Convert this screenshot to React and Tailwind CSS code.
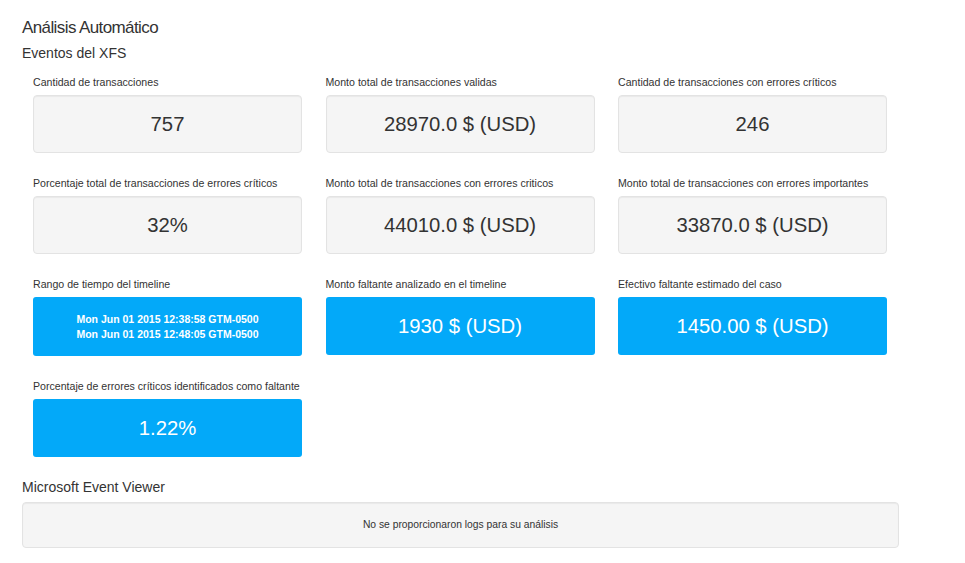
import React from 'react';

const rows = [
  [
    { label: 'Cantidad de transacciones', value: '757' },
    { label: 'Monto total de transacciones validas', value: '28970.0 $ (USD)' },
    { label: 'Cantidad de transacciones con errores críticos', value: '246' },
  ],
  [
    { label: 'Porcentaje total de transacciones de errores críticos', value: '32%' },
    { label: 'Monto total de transacciones con errores criticos', value: '44010.0 $ (USD)' },
    { label: 'Monto total de transacciones con errores importantes', value: '33870.0 $ (USD)' },
  ],
];

function Well({ label, value }) {
  return (
    <div>
      <div className="text-[10.6px] leading-[13px] text-[#333] mb-[6px] whitespace-nowrap">{label}</div>
      <div className="h-[58px] rounded-[4px] border border-[#e3e3e3] bg-[#f5f5f5] shadow-[inset_0_1px_1px_rgba(0,0,0,0.05)] flex items-center justify-center text-[20.3px] text-[#333]">
        {value}
      </div>
    </div>
  );
}

function BlueWell({ label, children, big = true, h = 'h-[58px]' }) {
  return (
    <div>
      <div className="text-[10.6px] leading-[13px] text-[#333] mb-[6px] whitespace-nowrap">{label}</div>
      <div
        className={`${h} rounded-[3px] bg-[#03a9f9] text-white flex flex-col items-center justify-center ${
          big ? 'text-[20.3px]' : 'text-[10.5px] font-bold leading-[15px]'
        }`}
      >
        {children}
      </div>
    </div>
  );
}

export default function App() {
  return (
    <div className="bg-white min-h-[563px] pl-[22px] pt-[17px] text-[#333]" style={{ fontFamily: '"Liberation Sans", Arial, sans-serif' }}>
      <h1 className="text-[17px] leading-[22px] tracking-[-0.6px]">Análisis Automático</h1>
      <h2 className="text-[14px] leading-[17px] mt-[6px]">Eventos del XFS</h2>

      <div className="ml-[11px] mt-[14px] grid grid-cols-[269px_269px_269px] gap-x-[23.5px] gap-y-[24px]">
        {rows.flat().map((c) => (
          <Well key={c.label} label={c.label} value={c.value} />
        ))}
        <BlueWell label="Rango de tiempo del timeline" big={false} h="h-[59px]">
          <span>Mon Jun 01 2015 12:38:58 GTM-0500</span>
          <span>Mon Jun 01 2015 12:48:05 GTM-0500</span>
        </BlueWell>
        <BlueWell label="Monto faltante analizado en el timeline">1930 $ (USD)</BlueWell>
        <BlueWell label="Efectivo faltante estimado del caso">1450.00 $ (USD)</BlueWell>
        <BlueWell label="Porcentaje de errores críticos identificados como faltante">1.22%</BlueWell>
      </div>

      <h2 className="text-[14px] leading-[17px] mt-[22px]">Microsoft Event Viewer</h2>
      <div className="mt-[6px] w-[877px] h-[46px] rounded-[4px] border border-[#e3e3e3] bg-[#f5f5f5] shadow-[inset_0_1px_1px_rgba(0,0,0,0.05)] flex items-center justify-center text-[10.3px]">
        No se proporcionaron logs para su análisis
      </div>
    </div>
  );
}
